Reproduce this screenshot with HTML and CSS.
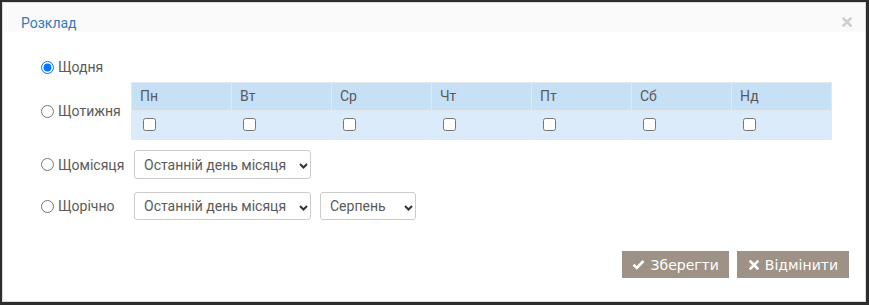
FILE: index.html
```html
<!DOCTYPE html>
<html lang="uk">
<head>
    <meta charset="UTF-8">
    <title>Розклад</title>
    <link rel="stylesheet" href="styles.css">
</head>
<body>
    <div class="frame">
        <div class="modal">
            <div class="modal-header">
                <span class="modal-title">Розклад</span>
                <button class="close" type="button">
                    <svg width="10" height="10" viewBox="0 0 10 10"><path d="M1.5 1.5 L8.5 8.5 M8.5 1.5 L1.5 8.5" stroke="#cfcfcf" stroke-width="2.6" stroke-linecap="square"/></svg>
                </button>
            </div>

            <div class="modal-body">
                <div class="row row-day">
                    <label class="opt"><input type="radio" name="period" checked> Щодня</label>
                </div>

                <div class="row row-week">
                    <label class="opt"><input type="radio" name="period"> Щотижня</label>
                    <table class="days">
                        <tr>
                            <th>Пн</th><th>Вт</th><th>Ср</th><th>Чт</th><th>Пт</th><th>Сб</th><th>Нд</th>
                        </tr>
                        <tr>
                            <td><input type="checkbox"></td>
                            <td><input type="checkbox"></td>
                            <td><input type="checkbox"></td>
                            <td><input type="checkbox"></td>
                            <td><input type="checkbox"></td>
                            <td><input type="checkbox"></td>
                            <td><input type="checkbox"></td>
                        </tr>
                    </table>
                </div>

                <div class="row row-month">
                    <label class="opt"><input type="radio" name="period"> Щомісяця</label>
                    <select class="pick pick-day">
                        <option>Останній день місяця</option>
                    </select>
                </div>

                <div class="row row-year">
                    <label class="opt"><input type="radio" name="period"> Щорічно</label>
                    <select class="pick pick-day">
                        <option>Останній день місяця</option>
                    </select>
                    <select class="pick pick-month">
                        <option>Серпень</option>
                    </select>
                </div>
            </div>

            <div class="modal-footer">
                <button class="btn" type="button">
                    <svg width="13" height="11" viewBox="0 0 13 11"><path d="M1.5 5.8 L4.8 9 L11.5 2" fill="none" stroke="#fff" stroke-width="2.6"/></svg>
                    Зберегти
                </button>
                <button class="btn btn-cancel" type="button">
                    <svg width="10" height="10" viewBox="0 0 10 10"><path d="M1.5 1.5 L8.5 8.5 M8.5 1.5 L1.5 8.5" stroke="#fff" stroke-width="2.6" stroke-linecap="square"/></svg>
                    Відмінити
                </button>
            </div>
        </div>
    </div>
</body>
</html>
```

FILE: styles.css
```css
html, body {
    margin: 0;
    padding: 0;
}

body {
    font-family: Roboto, "Liberation Sans", sans-serif;
    font-size: 14px;
    color: #5a5a5a;
    background: #2d2d2d;
}

.frame {
    width: 869px;
    height: 305px;
    box-sizing: border-box;
    border: solid #2d2d2d;
    border-width: 2px 3px 3px 2px;
}

.modal {
    height: 100%;
    box-sizing: border-box;
    background: #fff;
    border: 1px solid #dcdcdc;
}

.modal-header {
    height: 29px;
    background: #fafafa;
    display: flex;
    align-items: center;
    justify-content: space-between;
    padding: 0 13px 0 18px;
}

.modal-title {
    color: #337ab7;
    font-size: 14px;
    margin-top: 10px;
}

.close {
    background: none;
    border: 0;
    padding: 0;
    margin-top: 9px;
    display: flex;
}

.modal-body {
    padding: 25px 0 0 37px;
}

.row {
    display: flex;
    align-items: center;
}

.row-day {
    height: 20px;
    margin-bottom: 5px;
}

.row-week {
    margin-bottom: 10px;
}

.row-month {
    margin-bottom: 13px;
}

.opt {
    width: 91px;
    display: flex;
    align-items: center;
    gap: 4px;
}

.opt input {
    margin: 0 0 0 1px;
    width: 13px;
    height: 13px;
}

.days {
    border-collapse: collapse;
    border: 1px solid #e6e9ec;
}

.days th,
.days td {
    width: 91px;
    padding: 0 0 0 8px;
    text-align: left;
    border: 1px solid #e4e8ec;
}

.days th {
    height: 26px;
    padding-bottom: 1px;
    background: #c6e0f5;
    font-weight: normal;
    color: #5a5a5a;
}

.days td {
    height: 28px;
    background: #dcebfa;
}

.days input {
    margin: 0 0 2px 3px;
    width: 13px;
    height: 13px;
    vertical-align: middle;
}

.pick {
    appearance: none;
    height: 29px;
    margin-left: 3px;
    padding: 0 0 0 9px;
    border: 1px solid #ccc;
    border-radius: 3px;
    background: #fff url("data:image/svg+xml,%3Csvg xmlns='http://www.w3.org/2000/svg' width='9' height='6' viewBox='0 0 9 6'%3E%3Cpath d='M1 1 L4.5 4.5 L8 1' fill='none' stroke='%23333' stroke-width='2'/%3E%3C/svg%3E") no-repeat;
    font-family: Roboto, "Liberation Sans", sans-serif;
    font-size: 14px;
    color: #5a5a5a;
}

.pick-day {
    width: 177px;
    background-position: 164px 12px;
}

.pick-month {
    width: 96px;
    margin-left: 9px;
    background-position: 83px 12px;
}

.row-year .pick {
    height: 28px;
}

.modal-footer {
    display: flex;
    justify-content: flex-end;
    gap: 8px;
    padding: 31px 16px 0 0;
}

.btn {
    height: 27px;
    display: inline-flex;
    align-items: center;
    gap: 6px;
    padding: 0 10px;
    border: 0;
    background: #9e9185;
    color: #fff;
    font-family: "DejaVu Sans", Verdana, sans-serif;
    font-size: 14px;
}

.btn-cancel {
    padding: 0 11px 0 12px;
}
```
